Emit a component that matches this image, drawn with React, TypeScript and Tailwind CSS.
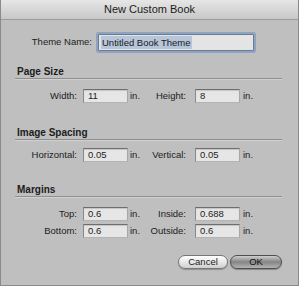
import React from "react";

const font = "font-['Liberation_Sans',Arial,sans-serif]";

function Field({ value, width = "w-[45px]" }: { value: string; width?: string }) {
  return (
    <div
      className={`${width} h-[14px] bg-[#e6e6e6] border border-t-[#6e6e6e] border-l-[#8a8a8a] border-r-[#a8a8a8] border-b-[#b4b4b4] shadow-[inset_0_1px_1px_rgba(0,0,0,0.15)] flex items-center pl-[4px] text-[9.5px] leading-none text-[#222]`}
    >
      {value}
    </div>
  );
}

function Heading({ title, className }: { title: string; className: string }) {
  return (
    <div className={`${className} h-[18px] flex items-end border-b border-[#8f8f8f] shadow-[0_1px_0_#d0d0d0]`}>
      <span className="pl-[2px] text-[10px] leading-[12px] font-bold text-[#1c1c1c]">{title}</span>
    </div>
  );
}

function Row({
  className,
  l1,
  v1,
  l2,
  v2,
}: {
  className: string;
  l1: string;
  v1: string;
  l2: string;
  v2: string;
}) {
  return (
    <div className={`${className} flex items-center h-[14px] text-[9.5px] text-[#1c1c1c]`}>
      <span className="w-[68px] text-right pr-[6px]">{l1}</span>
      <Field value={v1} />
      <span className="w-[18px] pl-[2px]">in.</span>
      <span className="w-[49px] text-right pr-[9px] whitespace-nowrap">{l2}</span>
      <Field value={v2} />
      <span className="pl-[3px]">in.</span>
    </div>
  );
}

export default function App() {
  return (
    <div className={`${font} w-[299px] h-[286px] bg-[#bfbfbf] border-x border-b border-[#8a8a8a] flex flex-col`}>
      <div className="h-[20px] bg-gradient-to-b from-[#e6e6e6] to-[#c8c8c8] border-b border-[#9c9c9c] flex items-center justify-center text-[11px] text-[#1a1a1a]">
        New Custom Book
      </div>

      <div className="flex flex-col pl-[14px] pr-[16px]">
        <div className="mt-[11px] h-[22px] flex items-center">
          <span className="w-[83px] text-right pr-[6px] text-[9.5px] text-[#1c1c1c] whitespace-nowrap">
            Theme Name:
          </span>
          <div className="w-[156px] h-[17px] rounded-[1px] ring-[2px] ring-[#7f9cc6]/80 bg-[#e4e4e4] border border-[#6f7b8a] flex items-center pl-[2px]">
            <span className="bg-[#b6c5d9] text-[9.5px] leading-[13px] px-[1px] text-[#1a1a1a]">
              Untitled Book Theme
            </span>
          </div>
        </div>

        <Heading title="Page Size" className="mt-[8px]" />
        <Row className="mt-[10px]" l1="Width:" v1="11" l2="Height:" v2="8" />

        <Heading title="Image Spacing" className="mt-[19px]" />
        <Row className="mt-[8px]" l1="Horizontal:" v1="0.05" l2="Vertical:" v2="0.05" />

        <Heading title="Margins" className="mt-[17px]" />
        <Row className="mt-[10px]" l1="Top:" v1="0.6" l2="Inside:" v2="0.688" />
        <Row className="mt-[3px]" l1="Bottom:" v1="0.6" l2="Outside:" v2="0.6" />

        <div className="mt-[17px] flex justify-end gap-[2px]">
          <button className="w-[50px] h-[14px] rounded-full border border-[#777] bg-gradient-to-b from-[#ffffff] via-[#e8e8e8] to-[#cfcfcf] text-[9.5px] leading-none text-[#1a1a1a] shadow-[0_1px_1px_rgba(0,0,0,0.25)]">
            Cancel
          </button>
          <button className="w-[52px] h-[14px] rounded-full border border-[#4e4e4e] bg-gradient-to-b from-[#cfcfcf] via-[#858585] to-[#b4b4b4] text-[9.5px] leading-none text-[#111] shadow-[0_1px_1px_rgba(0,0,0,0.3)]">
            OK
          </button>
        </div>
      </div>
    </div>
  );
}
